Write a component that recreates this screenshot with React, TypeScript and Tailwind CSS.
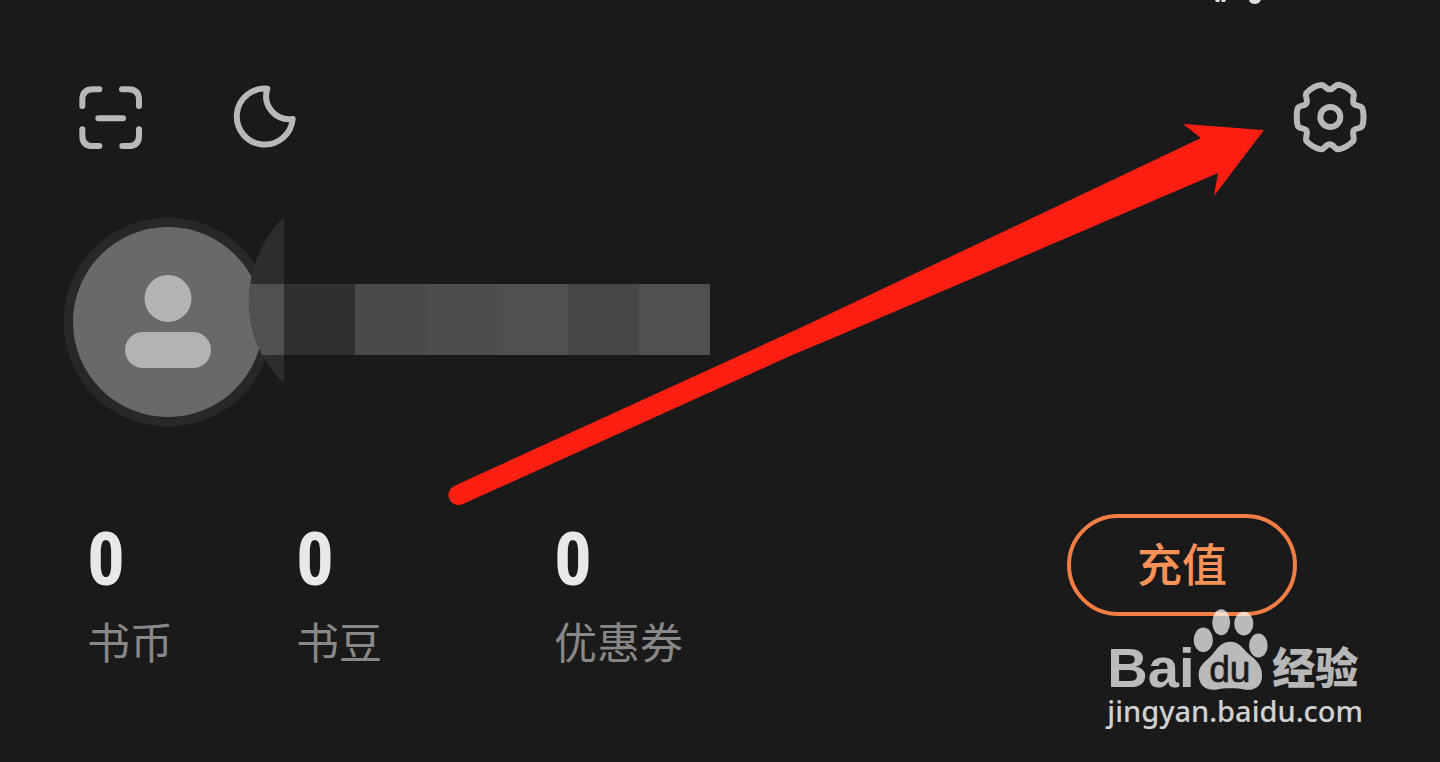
const stats = [
  { name: "书币", value: 0, width: "w-[209px]" },
  { name: "书豆", value: 0, width: "w-[258px]" },
  { name: "优惠券", value: 0, width: "w-[130px]" },
];

const mosaic = ["bg-[#303030]", "bg-[#494949]", "bg-[#4c4c4c]", "bg-[#505050]", "bg-[#474747]", "bg-[#505050]"];

function ScanIcon() {
  return (
    <svg viewBox="57 45 192 192" className="size-16" fill="none" stroke="currentColor" strokeWidth="18" strokeLinecap="round" aria-hidden="true">
      <path d="M67 108V90Q67 58 99 58H118M186 58H205Q237 58 237 90V108M237 178V197Q237 228 205 228H187M118 228H99Q67 228 67 197V178M115 145H189" />
    </svg>
  );
}

function MoonIcon() {
  return (
    <svg viewBox="519 44 192 192" className="size-16" fill="none" stroke="currentColor" strokeWidth="18" strokeLinejoin="round" aria-hidden="true">
      <path d="M622 55A84 84 0 1 0 698 146C648 153 606 108 622 55Z" />
    </svg>
  );
}

function GearIcon() {
  return (
    <svg viewBox="40 32 225 216" className="h-[72px] w-[75px]" fill="none" stroke="currentColor" strokeWidth="18" strokeLinejoin="round" aria-hidden="true">
      <path d="M124 44C136 42 136 57 150 57C164 57 164 42 177 43C192 45 212 57 221 68C226 77 217 88 221 98C226 109 240 103 247 112C253 124 253 156 247 168C240 177 226 171 221 182C217 192 226 203 221 212C210 223 192 234 177 237C164 238 164 222 150 222C136 222 136 238 123 237C108 234 91 223 80 212C75 203 85 192 81 182C76 171 62 177 55 168C50 156 50 124 55 112C62 103 76 109 81 98C85 88 75 77 80 68C91 57 108 45 124 44Z" />
      <circle cx="152" cy="140" r="30" />
    </svg>
  );
}

function Avatar() {
  return (
    <svg viewBox="64 217 220 210" className="h-[210px] w-[220px]" aria-hidden="true">
      <circle cx="168" cy="322" r="104.500" fill="#282828" />
      <circle cx="168" cy="322" r="95" fill="#696969" />
      <circle cx="168" cy="298.500" r="23.500" fill="#b3b3b3" />
      <rect x="125" y="332" width="86" height="36" rx="18" fill="#b3b3b3" />
      <path d="M284 217A117 117 0 0 0 284 384Z" fill="#2d2d2d" />
      <path d="M250 284H284V355H262Q244 320 250 284Z" fill="#505050" />
    </svg>
  );
}

function Arrow() {
  return (
    <svg viewBox="440 110 840 410" className="pointer-events-none absolute left-[440px] top-[110px] h-[410px] w-[840px]" aria-hidden="true">
      <path
        d="M454 486L800 328L1201 138L1183 124L1264 130L1214 196L1218 173L840 335L790 356L463 504A10 10 0 0 1 454 486Z"
        fill="#ff1f12"
      />
    </svg>
  );
}

function Watermark() {
  return (
    <div className="pointer-events-none absolute right-[77px] top-[608px] text-white/70">
      <div className="flex items-end">
        <span className="w-[86px] font-['Liberation_Sans'] text-[56px] font-bold leading-[46px]">Bai</span>
        <svg viewBox="430 324 226 248" className="h-[83px] w-[75px]" aria-hidden="true">
          <g fill="currentColor">
            <ellipse cx="461" cy="419" rx="29" ry="37" />
            <ellipse cx="515" cy="366" rx="27" ry="39" />
            <ellipse cx="583" cy="370" rx="29" ry="36" />
            <ellipse cx="627" cy="436" rx="28" ry="36" />
            <path d="M543 425C570 425 580 446 596 460C620 480 640 496 638 530C636 560 615 572 589 569C560 563 526 563 500 569C468 573 447 554 447 524C447 494 470 484 488 463C503 446 514 425 543 425Z" />
          </g>
          <text x="541" y="547" textAnchor="middle" fontFamily="Liberation Sans" fontSize="112" fill="#1a1a1a" stroke="#1a1a1a" strokeWidth="2">
            du
          </text>
        </svg>
        <span className="pl-1 text-[43px] font-black leading-[52px]">经验</span>
      </div>
      <p className="font-['Noto_Sans'] text-[29px] font-medium leading-10 text-white/80">jingyan.baidu.com</p>
    </div>
  );
}

export default function App() {
  return (
    <main className="relative min-h-screen overflow-hidden bg-[#1a1a1a] font-['Noto_Sans_CJK_SC',sans-serif] text-[#b8b8b8]">
      {/* tail of the status bar */}
      <svg viewBox="0 0 50 5" className="absolute right-[178px] top-0 h-[5px] w-[50px]" fill="#ddd" aria-hidden="true">
        <path d="M3 0H8L7 2H4ZM9 0H14L13 2H10ZM37 0H49Q47 4 43 4Q38 4 37 0Z" />
      </svg>

      <header className="flex items-center justify-between pl-[79px] pr-[72px] pt-[81px]">
        <div className="flex gap-[90px]">
          <button type="button" aria-label="扫一扫">
            <ScanIcon />
          </button>
          <button type="button" aria-label="夜间模式">
            <MoonIcon />
          </button>
        </div>
        <button type="button" aria-label="设置">
          <GearIcon />
        </button>
      </header>

      <section className="mt-16 flex pl-16">
        <Avatar />
        <div className="flex pt-[67px]">
          {mosaic.map((color, index) => (
            <div key={index} className={`size-[71px] ${color}`} />
          ))}
        </div>
      </section>

      <section className="mt-[87px] flex items-start justify-between pl-[87px] pr-[143px]">
        <dl className="flex">
          {stats.map((stat) => (
            <div key={stat.name} className={`flex flex-col-reverse ${stat.width}`}>
              <dt className="text-[43px] leading-[72px] text-[#888]">{stat.name}</dt>
              <dd className="font-[family-name:'Roboto_Condensed','Open_Sans_Condensed','Roboto',sans-serif] text-[75px] font-bold leading-[90px] text-[#e8e8e8]">
                {stat.value}
              </dd>
            </div>
          ))}
        </dl>
        <button
          type="button"
          className="h-[102px] w-[230px] rounded-full border-4 border-[#f27d45] pb-1.5 text-[45px] font-medium leading-none text-[#fb9258]"
        >
          充值
        </button>
      </section>

      <Arrow />
      <Watermark />
    </main>
  );
}
